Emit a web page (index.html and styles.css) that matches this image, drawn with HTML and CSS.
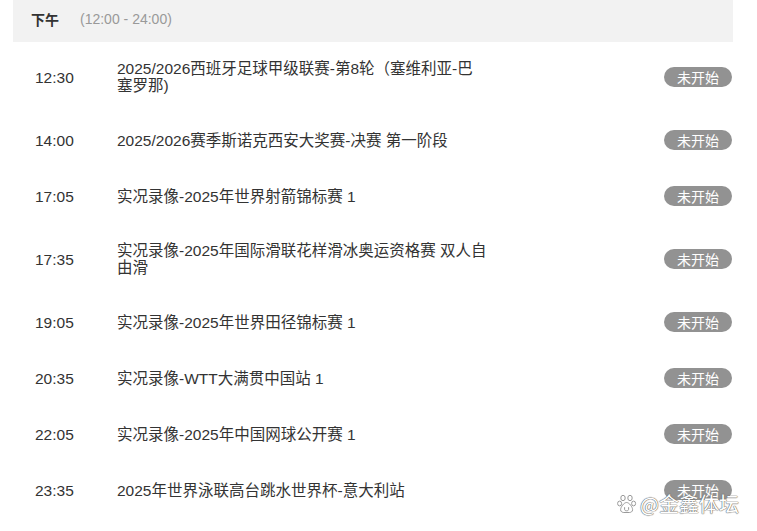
FILE: index.html
```html
<!DOCTYPE html>
<html lang="zh">
<head>
<meta charset="utf-8">
<title>赛程</title>
<link rel="stylesheet" href="styles.css">
</head>
<body>
<div class="schedule">
  <div class="period">
    <span class="period-name">下午</span>
    <span class="period-range">(12:00 - 24:00)</span>
  </div>
  <div class="row">
    <div class="time">12:30</div>
    <div class="title">2025/2026西班牙足球甲级联赛-第8轮（塞维利亚-巴塞罗那)</div>
    <div class="status">未开始</div>
  </div>
  <div class="row">
    <div class="time">14:00</div>
    <div class="title">2025/2026赛季斯诺克西安大奖赛-决赛 第一阶段</div>
    <div class="status">未开始</div>
  </div>
  <div class="row">
    <div class="time">17:05</div>
    <div class="title">实况录像-2025年世界射箭锦标赛 1</div>
    <div class="status">未开始</div>
  </div>
  <div class="row">
    <div class="time">17:35</div>
    <div class="title">实况录像-2025年国际滑联花样滑冰奥运资格赛 双人自由滑</div>
    <div class="status">未开始</div>
  </div>
  <div class="row">
    <div class="time">19:05</div>
    <div class="title">实况录像-2025年世界田径锦标赛 1</div>
    <div class="status">未开始</div>
  </div>
  <div class="row">
    <div class="time">20:35</div>
    <div class="title">实况录像-WTT大满贯中国站 1</div>
    <div class="status">未开始</div>
  </div>
  <div class="row">
    <div class="time">22:05</div>
    <div class="title">实况录像-2025年中国网球公开赛 1</div>
    <div class="status">未开始</div>
  </div>
  <div class="row">
    <div class="time">23:35</div>
    <div class="title">2025年世界泳联高台跳水世界杯-意大利站</div>
    <div class="status">未开始</div>
  </div>
</div>
<div class="watermark">
  <svg class="paw" width="20" height="20" viewBox="0 0 20 20">
    <g fill="#fff" stroke="#9a9a9a" stroke-width="1">
      <ellipse cx="6" cy="4" rx="2.2" ry="2.7"/>
      <ellipse cx="13" cy="4" rx="2.2" ry="2.7"/>
      <ellipse cx="2.6" cy="9.5" rx="2" ry="2.4"/>
      <ellipse cx="16.6" cy="9.5" rx="2" ry="2.4"/>
      <path d="M9.6 8.5c-2.6 0-6 4.5-6 7.2 0 2.2 2 2.8 3.2 2.8h5.6c1.2 0 3.2-0.6 3.2-2.8 0-2.7-3.4-7.2-6-7.2z"/>
      <path d="M7.6 13.2v2.2c0 1 0.8 1.4 2 1.4s2-0.4 2-1.4v-2.2" fill="none"/>
    </g>
  </svg>
  <span class="wm-text">@金鑫体坛</span>
</div>
</body>
</html>
```
FILE: styles.css
```css
html, body {
  margin: 0;
  padding: 0;
  background: #fff;
}
body {
  font-family: "Liberation Sans", "Noto Sans CJK SC", Arial, sans-serif;
  color: #333;
  position: relative;
  width: 757px;
  height: 531px;
  overflow: hidden;
}
.schedule {
  margin-left: 13px;
  width: 720px;
}
.period {
  height: 42px;
  background: #f2f2f2;
  display: flex;
  align-items: center;
  padding-left: 18px;
  padding-bottom: 4px;
  box-sizing: border-box;
  font-size: 14px;
}
.period-name {
  font-weight: bold;
  color: #333;
}
.period-range {
  color: #999;
  margin-left: 21px;
}
.row {
  display: flex;
  align-items: center;
  padding: 18px 0;
  font-size: 15.5px;
  line-height: 17px;
}
.time {
  width: 82px;
  padding-left: 22px;
  flex: none;
  color: #333;
}
.title {
  width: 371px;
  flex: none;
  color: #333;
}
.status {
  margin-left: auto;
  margin-right: 1px;
  width: 68px;
  height: 20px;
  border-radius: 10px;
  background: #929292;
  color: #fff;
  font-size: 14px;
  line-height: 20px;
  text-align: center;
  font-family: "Noto Sans CJK SC", sans-serif;
}
.watermark {
  position: absolute;
  left: 617px;
  top: 491px;
  display: flex;
  align-items: center;
  gap: 3px;
}
.paw {
  display: block;
}
.wm-text {
  font-family: "Noto Sans CJK SC", sans-serif;
  font-size: 20px;
  line-height: 26px;
  color: #fff;
  text-shadow: 0 0 1px #666, 0 0 1px #666, 0 0 1px #777;
}
```
